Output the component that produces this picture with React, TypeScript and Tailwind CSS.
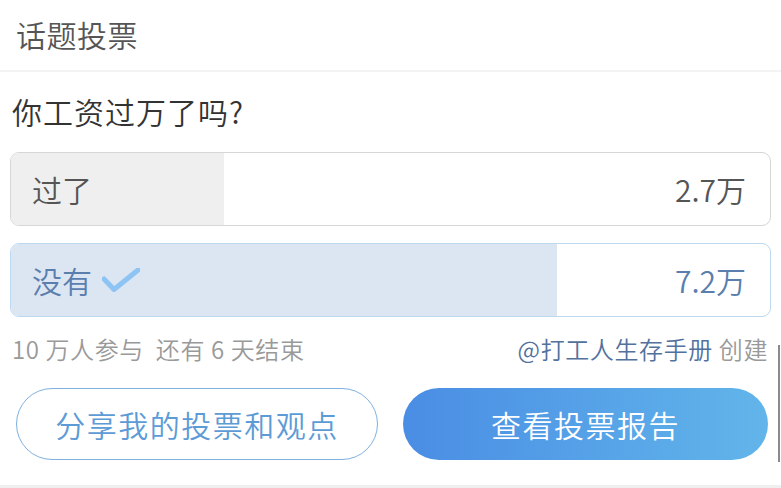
import React from 'react';

interface VoteOption {
  label: string;
  count: string;
  percent: number;
  chosen?: boolean;
}

const options: VoteOption[] = [
  { label: '过了', count: '2.7万', percent: 28 },
  { label: '没有', count: '7.2万', percent: 72, chosen: true },
];

const CheckMark = () => (
  <svg width="38" height="24" viewBox="0 0 38 24" fill="none">
    <path d="M2 11 L12 21.5 L36 2" stroke="#8ec4f4" strokeWidth="5" strokeLinecap="round" strokeLinejoin="round" />
  </svg>
);

export default function App() {
  return (
    <div className="relative flex h-[488px] w-[781px] flex-col overflow-hidden bg-white font-[350] font-['Noto_Sans_CJK_SC','Noto_Sans',sans-serif]">
      {/* Header */}
      <div className="flex h-[70px] items-center pl-4 pb-[2px] text-[30px] tracking-[0.5px] text-[#555]">话题投票</div>
      <div className="h-[2px] bg-[#f3f3f3]"></div>

      {/* Question */}
      <div className="pt-[19px] pl-3 text-[30px] leading-[40px] tracking-[1px] text-[#333]">你工资过万了吗?</div>

      {/* Options */}
      <div className="mt-[21px] flex flex-col gap-[17px] px-[10px]">
        {options.map((opt) => (
          <div
            key={opt.label}
            className={
              opt.chosen
                ? 'relative h-[74px] overflow-hidden rounded-[9px] border border-[#bcd9f0] bg-white'
                : 'relative h-[74px] overflow-hidden rounded-[9px] border border-[#d6d6d6] bg-white'
            }
          >
            <div
              className={opt.chosen ? 'absolute inset-y-0 left-0 bg-[#dce6f2]' : 'absolute inset-y-0 left-0 bg-[#efefef]'}
              style={{ width: `${opt.percent}%` }}
            ></div>
            <div className="relative flex h-full items-center justify-between pl-[21px] pr-[24px] text-[30px]">
              <div className={opt.chosen ? 'flex items-center gap-[10px] text-[#5a7eae]' : 'flex items-center text-[#555]'}>
                <span>{opt.label}</span>
                {opt.chosen && <CheckMark />}
              </div>
              <span className={opt.chosen ? 'text-[#5a7eae]' : 'text-[#555]'}>{opt.count}</span>
            </div>
          </div>
        ))}
      </div>

      {/* Meta */}
      <div className="mt-[17px] flex items-center justify-between pl-3 pr-[13px] text-[24px] leading-[30px] tracking-[0.6px] text-[#999]">
        <span>10 万人参与&nbsp;&nbsp;还有 6 天结束</span>
        <span>
          <span className="text-[#52719d]">@打工人生存手册</span> 创建
        </span>
      </div>

      {/* Actions */}
      <div className="mt-[24px] flex gap-[25px] pl-[16px] pr-[13px]">
        <button className="flex h-[72px] w-[362px] items-center justify-center rounded-full border-[1.5px] border-[#7eb0e0] text-[30px] tracking-[1.5px] text-[#5d9bd6]">
          分享我的投票和观点
        </button>
        <button className="flex h-[72px] flex-1 items-center justify-center rounded-full bg-gradient-to-r from-[#4a8de4] to-[#62b5ea] text-[30px] tracking-[1.5px] text-white">
          查看投票报告
        </button>
      </div>

      <div className="flex-1"></div>
      <div className="h-[3px] bg-[#efefef]"></div>

      {/* edge scroll indicator */}
      <div className="absolute right-[1px] top-[345px] h-[117px] w-[2px] bg-[#8a8a8a]"></div>
    </div>
  );
}
